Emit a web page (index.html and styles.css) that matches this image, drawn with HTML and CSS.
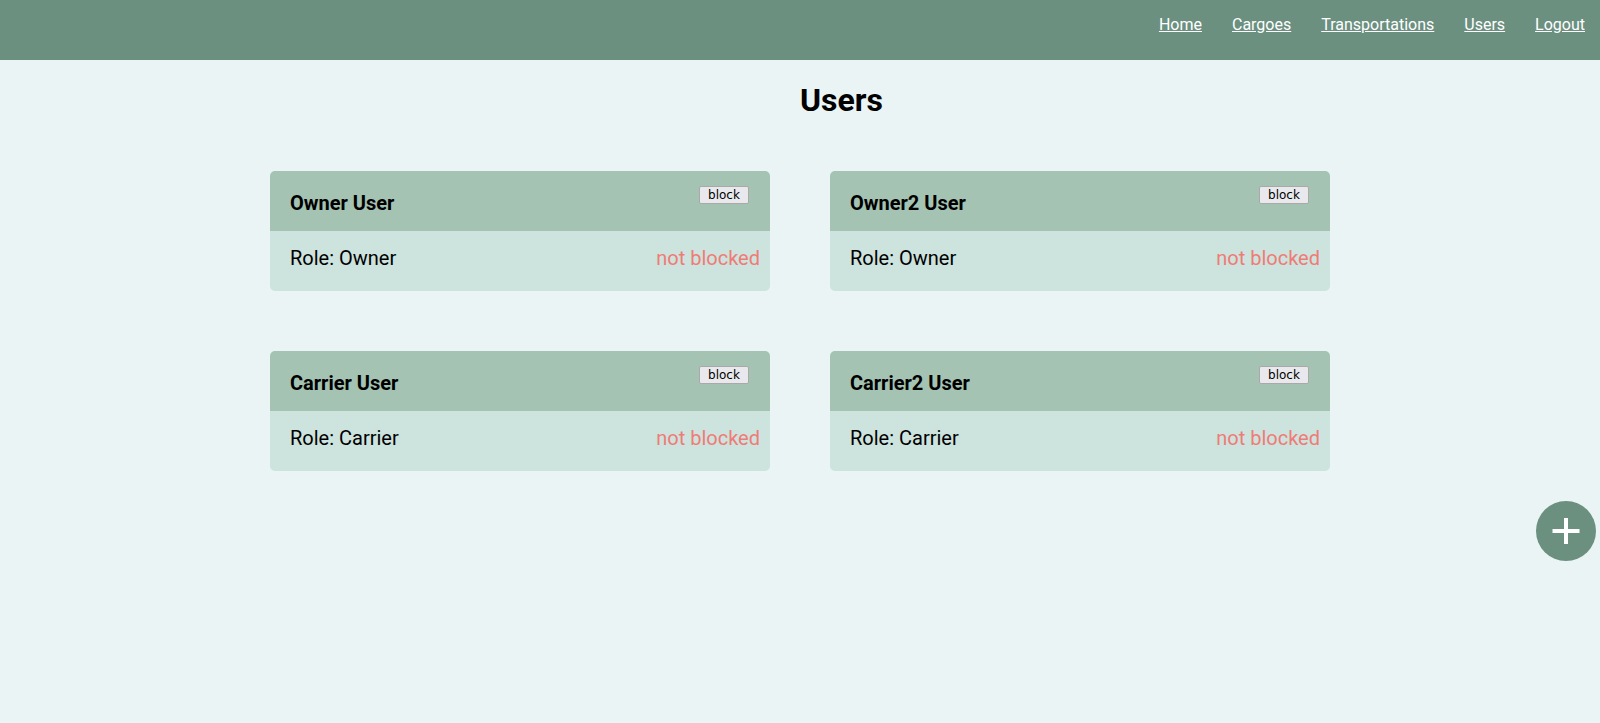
FILE: index.html
```html
<!DOCTYPE html>
<html>
<head>
<meta charset="utf-8">
<link rel="stylesheet" href="styles.css">
</head>
<body>
<header class="topbar">
  <nav class="nav">
    <a href="#" class="nav-link">Home</a>
    <a href="#" class="nav-link">Cargoes</a>
    <a href="#" class="nav-link">Transportations</a>
    <a href="#" class="nav-link">Users</a>
    <a href="#" class="nav-link">Logout</a>
  </nav>
</header>
<main class="page">
  <h1 class="page-title">Users</h1>
  <div class="grid">
    <div class="card">
      <div class="card-head"><span class="card-name">Owner User</span><button class="block-btn">block</button></div>
      <div class="card-body"><span>Role: Owner</span><span class="status">not blocked</span></div>
    </div>
    <div class="card">
      <div class="card-head"><span class="card-name">Owner2 User</span><button class="block-btn">block</button></div>
      <div class="card-body"><span>Role: Owner</span><span class="status">not blocked</span></div>
    </div>
    <div class="card">
      <div class="card-head"><span class="card-name">Carrier User</span><button class="block-btn">block</button></div>
      <div class="card-body"><span>Role: Carrier</span><span class="status">not blocked</span></div>
    </div>
    <div class="card">
      <div class="card-head"><span class="card-name">Carrier2 User</span><button class="block-btn">block</button></div>
      <div class="card-body"><span>Role: Carrier</span><span class="status">not blocked</span></div>
    </div>
  </div>
</main>
<button class="fab" aria-label="add">
  <svg width="30" height="30" viewBox="0 0 30 30"><path d="M15 2v26M1.5 15h27" stroke="#fff" stroke-width="4" fill="none"/></svg>
</button>
</body>
</html>
```
FILE: styles.css
```css
* { box-sizing: border-box; }
html, body { margin: 0; padding: 0; }
body {
  background: #eaf4f4;
  font-family: Roboto, "Noto Sans", sans-serif;
  color: #000;
  min-height: 723px;
}
.topbar {
  height: 60px;
  background: #6b9080;
  display: flex;
  justify-content: flex-end;
  padding: 14px 15px 0 0;
}
.nav { display: flex; align-items: flex-start; }
.nav-link {
  color: #fff;
  font-size: 16px;
  line-height: 22px;
  margin-left: 30px;
  text-decoration: underline;
}
.page { width: 1060px; margin: 0 auto; }
.page-title {
  margin: 20px 0 0 0;
  padding-left: 83px;
  text-align: center;
  font-size: 32px;
  font-weight: 700;
  line-height: 40px;
}
.grid {
  display: grid;
  grid-template-columns: 500px 500px;
  column-gap: 60px;
  row-gap: 60px;
  margin-top: 51px;
}
.card {
  border-radius: 5px;
  overflow: hidden;
}
.card-head {
  height: 60px;
  background: #a4c3b2;
  display: flex;
  justify-content: space-between;
  align-items: flex-start;
  padding: 15px 21px 0 20px;
}
.card-name {
  font-size: 20px;
  font-weight: 700;
  line-height: 24px;
  margin-top: 5px;
}
.block-btn {
  width: 50px;
  height: 18px;
  padding: 1px 0 0 0;
  font-family: "DejaVu Sans", sans-serif;
  font-size: 12px;
  line-height: 15px;
  color: #000;
  background: #e9e9ed;
  border: 1px solid #a9a9a9;
  border-radius: 2px;
}
.card-body {
  height: 60px;
  background: #cce3de;
  display: flex;
  justify-content: space-between;
  align-items: center;
  padding: 0 10px 6px 20px;
  font-size: 20px;
}
.status { color: #f07b76; }
.fab {
  position: absolute;
  left: 1536px;
  top: 501px;
  width: 60px;
  height: 60px;
  border-radius: 50%;
  border: none;
  background: #6b9080;
  display: flex;
  align-items: center;
  justify-content: center;
  padding: 0;
}
.fab svg { display: block; }
```
